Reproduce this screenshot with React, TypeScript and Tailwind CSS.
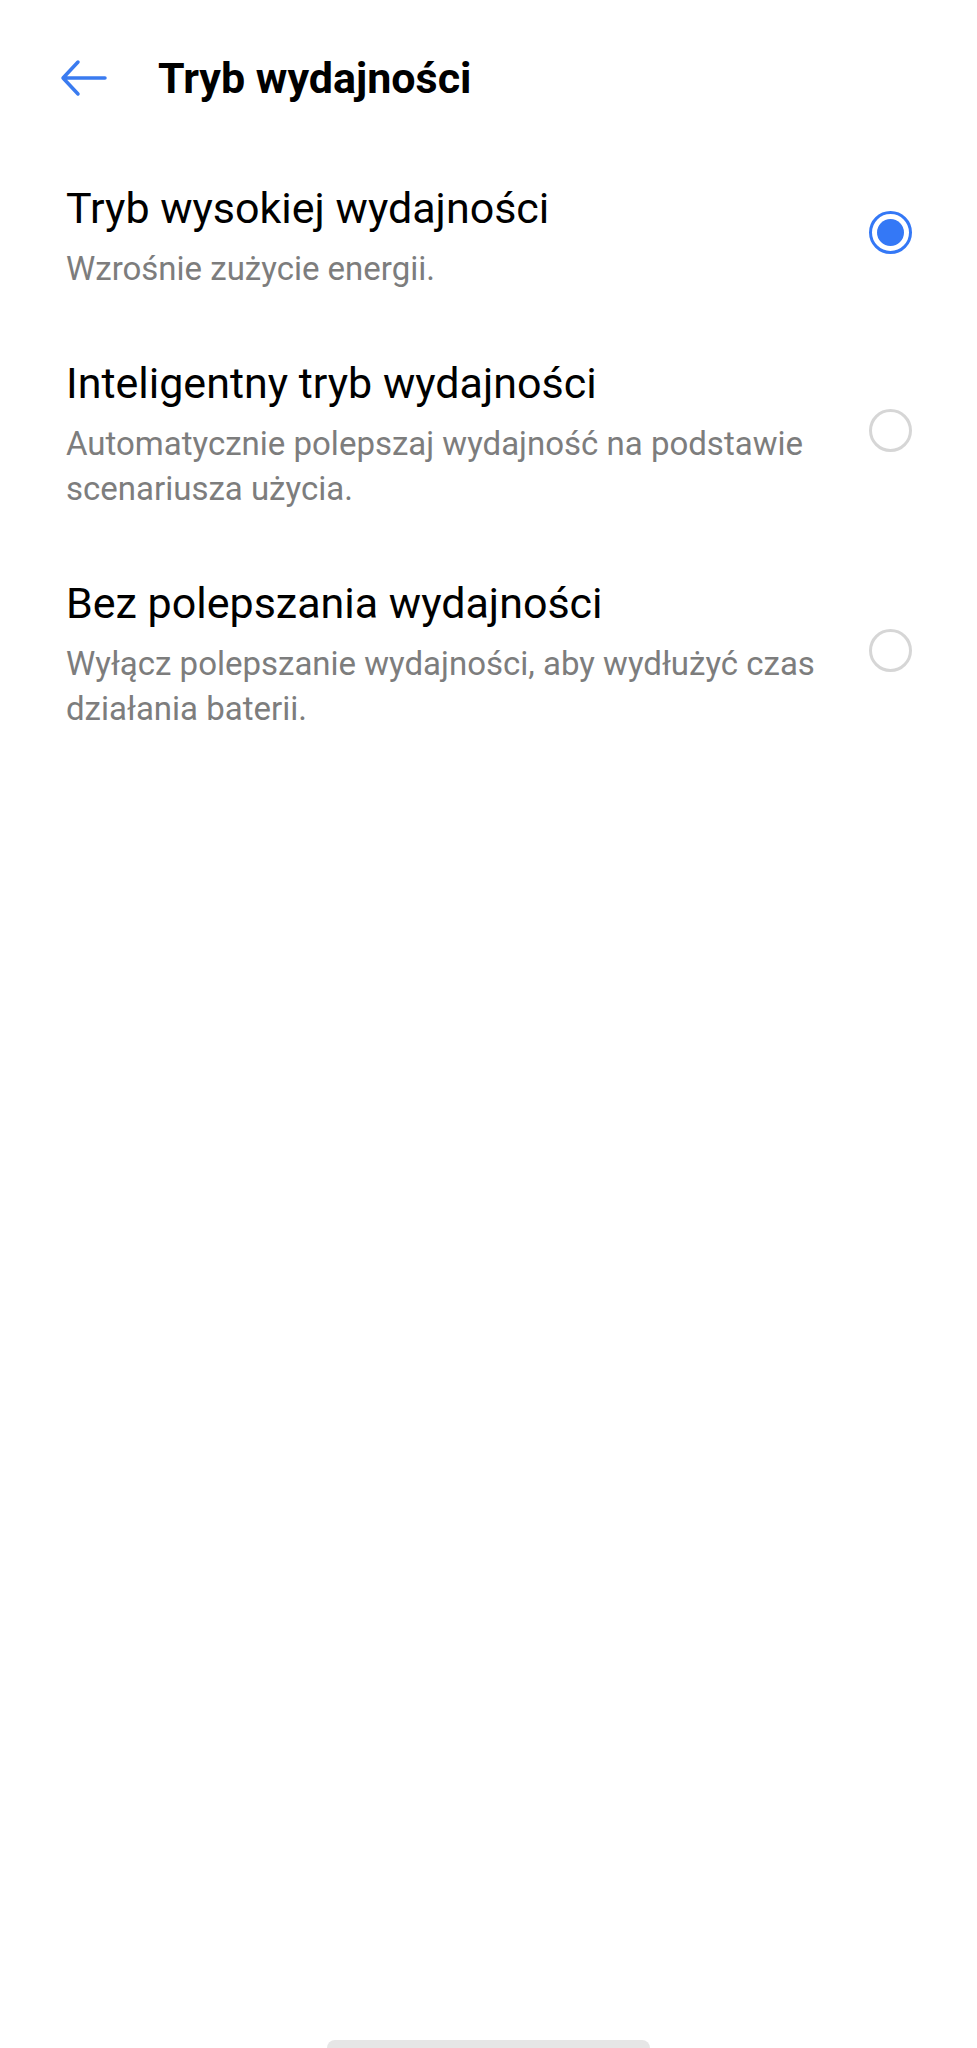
import React from "react";

const items = [
  {
    title: "Tryb wysokiej wydajności",
    sub: "Wzrośnie zużycie energii.",
    selected: true,
  },
  {
    title: "Inteligentny tryb wydajności",
    sub: "Automatycznie polepszaj wydajność na podstawie scenariusza użycia.",
    selected: false,
  },
  {
    title: "Bez polepszania wydajności",
    sub: "Wyłącz polepszanie wydajności, aby wydłużyć czas działania baterii.",
    selected: false,
  },
];

function Radio({ selected }: { selected: boolean }) {
  if (selected) {
    return (
      <div className="mb-[7px] w-[43px] h-[43px] rounded-full border-[3.5px] border-[#3478f6] flex items-center justify-center shrink-0">
        <div className="w-[27px] h-[27px] rounded-full bg-[#3478f6]" />
      </div>
    );
  }
  return <div className="mb-[6px] w-[43px] h-[43px] rounded-full border-[3px] border-[#d6d6d6] shrink-0" />;
}

export default function App() {
  return (
    <div
      className="h-[2048px] w-[977px] bg-white flex flex-col overflow-hidden"
      style={{ fontFamily: "Roboto, 'Noto Sans', sans-serif" }}
    >
      <div className="h-[148px] pt-2 flex items-center pl-[60px]">
        <svg width="48" height="38" viewBox="0 0 48 38" fill="none" className="shrink-0">
          <path
            d="M18 3 L3 19 L18 35 M3 19 H45"
            stroke="#3a7bf0"
            strokeWidth="3.5"
            strokeLinecap="round"
            strokeLinejoin="round"
          />
        </svg>
        <div className="ml-[50px] text-[43px] leading-[56px] font-bold text-black">Tryb wydajności</div>
      </div>
      <div className="flex flex-col">
        {items.map((it) => (
          <div key={it.title} className="flex items-center py-8 pl-[66px] pr-[65px]">
            <div className="flex-1 min-w-0 pr-[40px]">
              <div className="text-[43px] leading-[56px] text-black">{it.title}</div>
              <div className="mt-[10px] text-[33px] leading-[45px] text-[#7d7d7d]">{it.sub}</div>
            </div>
            <Radio selected={it.selected} />
          </div>
        ))}
      </div>
      <div className="flex-1" />
      <div className="h-[8px] flex justify-center">
        <div className="w-[323px] h-[16px] rounded-full bg-[#e6e6e6]" />
      </div>
    </div>
  );
}
